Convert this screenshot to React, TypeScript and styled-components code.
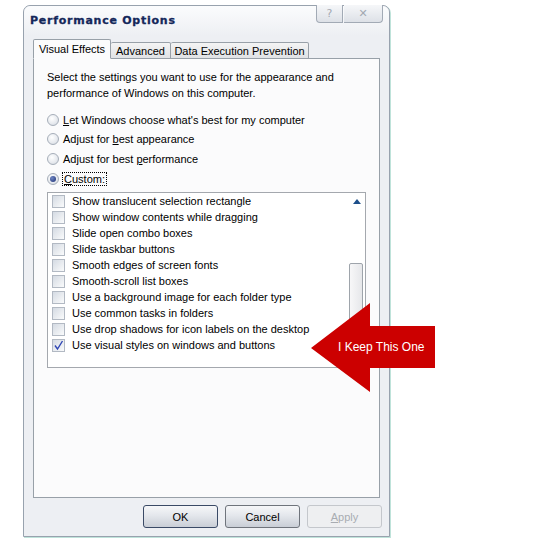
import React from "react";
import styled, { createGlobalStyle } from "styled-components";

const GlobalStyle = createGlobalStyle`
  html, body {
    margin: 0;
    padding: 0;
    background: #ffffff;
  }
  body {
    font-family: "Liberation Sans", Arial, sans-serif;
    font-size: 11px;
    color: #000;
  }
`;

const Page = styled.div`
  position: relative;
  width: 550px;
  height: 544px;
  padding: 5px 0 0 23px;
  box-sizing: border-box;
`;

const Window = styled.div`
  width: 367px;
  height: 532px;
  box-sizing: border-box;
  border: 1px solid #98a2ae;
  border-radius: 7px 7px 0 0;
  background: #edeff3;
  display: flex;
  flex-direction: column;
  box-shadow: 1px 1px 0 #bfe3da;
`;

const TitleBar = styled.div`
  height: 30px;
  display: flex;
  align-items: flex-start;
  justify-content: space-between;
  padding: 0 6px 0 6px;
  border-radius: 7px 7px 0 0;
  background: linear-gradient(#fbfcfd, #edeff3);
`;

const Title = styled.div`
  margin-top: 8px;
  font-family: "DejaVu Sans", Verdana, sans-serif;
  font-weight: bold;
  font-size: 11px;
  letter-spacing: 0.75px;
  color: #14275a;
  -webkit-text-stroke: 0.3px #14275a;
`;

const Controls = styled.div`
  display: flex;
  margin-top: -1px;
`;

const CtrlButton = styled.div<{ $w: number; $left?: boolean }>`
  width: ${({ $w }) => $w}px;
  height: 18px;
  box-sizing: border-box;
  border: 1px solid #a2aab5;
  border-top: none;
  border-left: ${({ $left }) => ($left ? "1px solid #a2aab5" : "none")};
  border-radius: ${({ $left }) => ($left ? "0 0 0 4px" : "0 0 4px 0")};
  background: linear-gradient(#f6f7f9, #dde1e7);
  display: flex;
  align-items: center;
  justify-content: center;
  color: #a3a9b2;
  font-family: "DejaVu Sans", sans-serif;
  font-size: 11px;
  margin-right: ${({ $left }) => ($left ? "1px" : "0")};
`;

const Body = styled.div`
  flex: 1;
  display: flex;
  flex-direction: column;
  padding: 3px 0 0 9px;
`;

const TabStrip = styled.div`
  display: flex;
  align-items: flex-end;
  height: 20px;
  position: relative;
  z-index: 1;
  margin-bottom: -1px;
`;

const Tab = styled.div<{ $w: number; $active?: boolean }>`
  width: ${({ $w }) => $w}px;
  height: ${({ $active }) => ($active ? 20 : 17)}px;
  box-sizing: border-box;
  border: 1px solid #98a0a8;
  border-bottom: ${({ $active }) => ($active ? "1px solid #fbfbfc" : "1px solid #98a0a8")};
  border-left: ${({ $active }) => ($active ? "1px solid #98a0a8" : "none")};
  border-radius: 2px 2px 0 0;
  background: ${({ $active }) =>
    $active ? "#fbfbfc" : "linear-gradient(#f4f4f4, #e0e2e5)"};
  display: flex;
  align-items: center;
  justify-content: center;
  padding-top: ${({ $active }) => ($active ? 0 : 1)}px;
  font-size: 11px;
`;

const Panel = styled.div`
  width: 347px;
  height: 440px;
  box-sizing: border-box;
  border: 1px solid #98a0a8;
  background: #fbfbfc;
  padding: 10px 0 0 13px;
  display: flex;
  flex-direction: column;
`;

const Description = styled.p`
  margin: 0;
  line-height: 16px;
  width: 310px;
`;

const RadioGroup = styled.div`
  margin-top: 9px;
  display: flex;
  flex-direction: column;
`;

const RadioRow = styled.label`
  height: 19.6px;
  display: flex;
  align-items: center;
  gap: 4px;
`;

const RadioDot = styled.span<{ $checked?: boolean }>`
  width: 12px;
  height: 12px;
  box-sizing: border-box;
  border-radius: 50%;
  border: 1px solid #a6aeb9;
  background: radial-gradient(circle at 40% 35%, #ffffff 0%, #e6e9ee 60%, #cdd3db 100%);
  display: flex;
  align-items: center;
  justify-content: center;

  &::after {
    content: "";
    display: ${({ $checked }) => ($checked ? "block" : "none")};
    width: 6px;
    height: 6px;
    border-radius: 50%;
    background: radial-gradient(circle at 35% 35%, #6f86c4, #1c2f72);
  }
`;

const U = styled.span`
  text-decoration: underline;
`;

const Focus = styled.span`
  outline: 1px dotted #000;
  outline-offset: 0;
  padding: 0 1px;
`;

const ListBox = styled.div`
  margin-top: 4px;
  width: 319px;
  height: 176px;
  box-sizing: border-box;
  border: 1px solid #a4a8ae;
  background: #ffffff;
  display: flex;
`;

const ListItems = styled.div`
  flex: 1;
  display: flex;
  flex-direction: column;
`;

const ListRow = styled.div`
  height: 16px;
  display: flex;
  align-items: center;
  padding-left: 4px;
  gap: 7px;
  white-space: nowrap;
`;

const CheckBox = styled.span`
  width: 13px;
  height: 13px;
  box-sizing: border-box;
  border: 1px solid #b2b9c3;
  background: linear-gradient(135deg, #d4dae3 0%, #e9ecf0 55%, #fafbfc 100%);
  display: flex;
  align-items: center;
  justify-content: center;
`;

const ScrollColumn = styled.div`
  width: 16px;
  display: flex;
  flex-direction: column;
  align-items: center;
  padding-top: 6px;
  margin-right: 1px;
`;

const UpArrow = styled.div`
  width: 0;
  height: 0;
  border-left: 4px solid transparent;
  border-right: 4px solid transparent;
  border-bottom: 5px solid #1d4f8a;
  margin-left: 1px;
`;

const Thumb = styled.div`
  margin-top: 59px;
  width: 14px;
  height: 87px;
  box-sizing: border-box;
  border: 1px solid #9ea4ab;
  border-radius: 2px;
  background: linear-gradient(90deg, #f7f7f8, #e6e7ea);
`;

const ButtonRow = styled.div`
  margin-top: 7px;
  display: flex;
  justify-content: flex-end;
  gap: 7px;
  padding-right: 7px;
`;

const Button = styled.div<{ $variant?: "default" | "normal" | "disabled" }>`
  width: 75px;
  height: 23px;
  box-sizing: border-box;
  border-radius: 3px;
  border: 1px solid
    ${({ $variant }) =>
      $variant === "default" ? "#3a4a66" : $variant === "disabled" ? "#c4c7cc" : "#6f747c"};
  background: ${({ $variant }) =>
    $variant === "disabled"
      ? "#eeeff1"
      : "linear-gradient(#f6f7f9 0%, #e4e7ec 45%, #c9ced6 100%)"};
  color: ${({ $variant }) => ($variant === "disabled" ? "#a8acb2" : "#000")};
  display: flex;
  align-items: center;
  justify-content: center;
  font-size: 11px;
`;

const Callout = styled.div`
  position: absolute;
  left: 311px;
  top: 303px;
  width: 125px;
  height: 90px;
`;

const CalloutLabel = styled.span`
  position: absolute;
  left: 27px;
  top: 37px;
  color: #ffffff;
  font-family: "Liberation Sans", Arial, sans-serif;
  font-size: 12px;
  white-space: nowrap;
`;

const effects: { label: string; checked?: boolean }[] = [
  { label: "Show translucent selection rectangle" },
  { label: "Show window contents while dragging" },
  { label: "Slide open combo boxes" },
  { label: "Slide taskbar buttons" },
  { label: "Smooth edges of screen fonts" },
  { label: "Smooth-scroll list boxes" },
  { label: "Use a background image for each folder type" },
  { label: "Use common tasks in folders" },
  { label: "Use drop shadows for icon labels on the desktop" },
  { label: "Use visual styles on windows and buttons", checked: true },
];

const Check = () => (
  <svg width="11" height="11" viewBox="0 0 11 11">
    <path d="M2 5.5 L4.5 9 L9.5 1" fill="none" stroke="#2f46b4" strokeWidth="1.4" />
  </svg>
);

export default function App() {
  return (
    <>
      <GlobalStyle />
      <Page>
        <Window>
          <TitleBar>
            <Title>Performance Options</Title>
            <Controls>
              <CtrlButton $w={27} $left>?</CtrlButton>
              <CtrlButton $w={39}>✕</CtrlButton>
            </Controls>
          </TitleBar>
          <Body>
            <TabStrip>
              <Tab $w={78} $active>Visual Effects</Tab>
              <Tab $w={60}>Advanced</Tab>
              <Tab $w={138}>Data Execution Prevention</Tab>
            </TabStrip>
            <Panel>
              <Description>
                Select the settings you want to use for the appearance and performance of Windows on
                this computer.
              </Description>
              <RadioGroup>
                <RadioRow>
                  <RadioDot />
                  <span>
                    <U>L</U>et Windows choose what's best for my computer
                  </span>
                </RadioRow>
                <RadioRow>
                  <RadioDot />
                  <span>
                    Adjust for <U>b</U>est appearance
                  </span>
                </RadioRow>
                <RadioRow>
                  <RadioDot />
                  <span>
                    Adjust for best <U>p</U>erformance
                  </span>
                </RadioRow>
                <RadioRow>
                  <RadioDot $checked />
                  <Focus>
                    <U>C</U>ustom:
                  </Focus>
                </RadioRow>
              </RadioGroup>
              <ListBox>
                <ListItems>
                  {effects.map((e) => (
                    <ListRow key={e.label}>
                      <CheckBox>{e.checked && <Check />}</CheckBox>
                      <span>{e.label}</span>
                    </ListRow>
                  ))}
                </ListItems>
                <ScrollColumn>
                  <UpArrow />
                  <Thumb />
                </ScrollColumn>
              </ListBox>
            </Panel>
            <ButtonRow>
              <Button $variant="default">OK</Button>
              <Button $variant="normal">Cancel</Button>
              <Button $variant="disabled">
                <U>A</U>pply
              </Button>
            </ButtonRow>
          </Body>
        </Window>
        <Callout>
          <svg width="125" height="90" viewBox="0 0 125 90">
            <polygon points="0,45 59,0 59,23 124,23 124,65 59,65 59,89" fill="#cc0000" />
          </svg>
          <CalloutLabel>I Keep This One</CalloutLabel>
        </Callout>
      </Page>
    </>
  );
}
